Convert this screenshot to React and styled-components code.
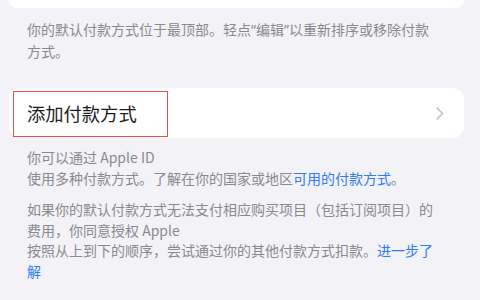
import React from "react";
import styled, { createGlobalStyle } from "styled-components";

const Global = createGlobalStyle`
  html, body { margin: 0; padding: 0; background: #f2f2f7; }
  body { width: 480px; height: 300px; overflow: hidden;
    font-family: "Noto Sans CJK SC", "Noto Sans", sans-serif; }
`;

const Page = styled.div`
  width: 480px;
  height: 300px;
  background: #f2f2f7;
  display: flex;
  flex-direction: column;
  overflow: hidden;
`;

const Card = styled.div`
  margin: ${(p) => p.$mt || 0}px 16px 0 9px;
  background: #ffffff;
  border-radius: ${(p) => (p.$top ? "0 0 11px 11px" : "11px")};
  height: ${(p) => p.$h}px;
  display: flex;
  align-items: center;
  position: relative;
`;

const Note = styled.p`
  margin: ${(p) => p.$mt}px 0 0 0;
  padding: 0 20px 0 27px;
  font-size: 14px;
  line-height: 20.5px;
  color: #8a8a8e;
`;

const Quote = styled.span`
  font-family: "Noto Sans", "Liberation Sans", sans-serif;
`;

const Link = styled.span`
  color: #2f7cf6;
`;

const RowLabel = styled.span`
  margin-left: 18px;
  font-size: 18.3px;
  color: #1c1c1e;
  flex: 1;
`;

const Highlight = styled.div`
  position: absolute;
  left: 4px;
  top: 3px;
  width: 155px;
  height: 46px;
  border: 1.6px solid #ec4b4b;
  box-sizing: border-box;
`;

const Chevron = styled.svg`
  margin-right: 20px;
  width: 8px;
  height: 13px;
`;

export default function App() {
  return (
    <Page>
      <Global />
      <Card $top $h={8} />
      <Note $mt={11}>
        你的默认付款方式位于最顶部。轻点<Quote>“</Quote>编辑<Quote>”</Quote>以重新排序或移除付款
        <br />
        方式。
      </Note>
      <Card $h={50} $mt={27}>
        <Highlight />
        <RowLabel>添加付款方式</RowLabel>
        <Chevron viewBox="0 0 8 13">
          <path d="M1.2 1.2 L6.5 6.5 L1.2 11.8" fill="none" stroke="#c4c4c7" strokeWidth="1.7" strokeLinecap="round" strokeLinejoin="round" />
        </Chevron>
      </Card>
      <Note $mt={9}>
        你可以通过 Apple ID
        <br />
        使用多种付款方式。了解在你的国家或地区<Link>可用的付款方式</Link>。
      </Note>
      <Note $mt={11}>
        如果你的默认付款方式无法支付相应购买项目（包括订阅项目）的
        <br />
        费用，你同意授权 Apple
        <br />
        按照从上到下的顺序，尝试通过你的其他付款方式扣款。<Link>进一步了</Link>
        <br />
        <Link>解</Link>
      </Note>
    </Page>
  );
}
